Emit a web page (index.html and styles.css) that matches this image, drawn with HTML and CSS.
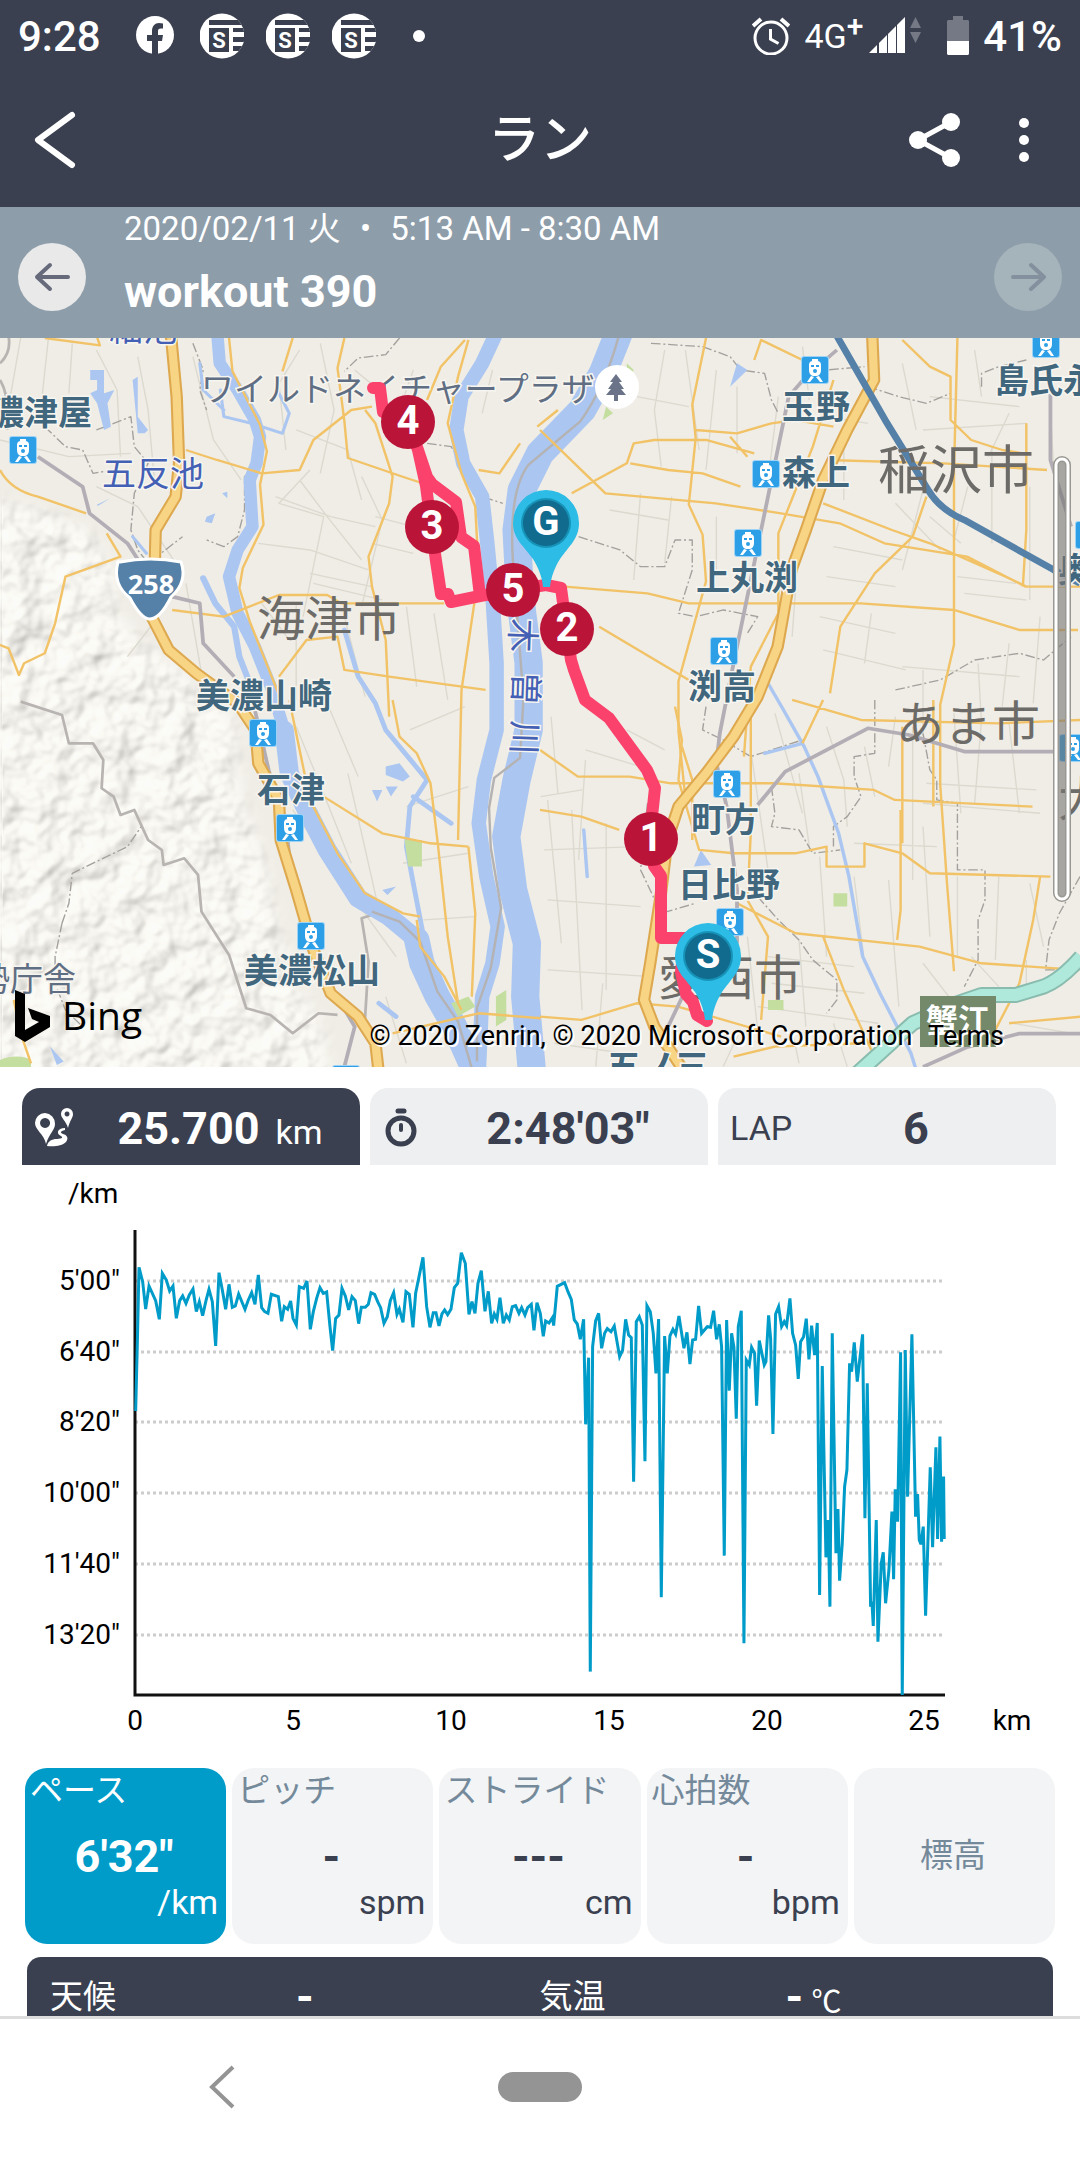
FILE: index.html
```html
<!DOCTYPE html>
<html lang="ja">
<head>
  <meta charset="utf-8">
  <meta name="viewport" content="width=device-width, initial-scale=1">
  <title>ラン - workout 390</title>
  <link rel="stylesheet" href="styles.css">
</head>
<body>
  <!-- shared icons -->
  <svg class="defs" width="0" height="0" aria-hidden="true">
    <symbol id="news" viewBox="0 0 44 46">
      <clipPath id="newsClip"><circle cx="22" cy="23" r="22.500"/></clipPath>
      <g clip-path="url(#newsClip)">
        <path fill="#fff" d="M0 0h44v46H0z"/>
        <path fill="#3a404f" d="M9 7h35v5H9zM9 15h20v24H9zM33 15h11v4H33zM33 24h11v5H33zM33 33h11v5H33z"/>
      </g>
      <text x="19" y="35" fill="#fff" font-size="22" font-weight="700" text-anchor="middle" font-family="Roboto, sans-serif">S</text>
    </symbol>
    <symbol id="train" viewBox="0 0 28 28">
      <rect width="28" height="28" rx="3" fill="#9fd3f5"/>
      <rect x="1" y="1" width="26" height="26" rx="2" fill="#2c9fe6"/>
      <path fill="#fff" d="M11 3h6v2h-6zM8 9q0-4 4-4h4q4 0 4 4v5q0 5-4 6h-4q-4-1-4-6zM10 20l3 1-4 5H6zM18 20l-3 1 4 5h3z"/>
      <path fill="#2c9fe6" d="M10 9h3v2h-3zM15 9h3v2h-3z"/>
      <circle cx="14" cy="15" r="2" fill="#2c9fe6"/>
    </symbol>
    <symbol id="pin" viewBox="0 0 68 98">
      <path fill="#2cbce6" d="M34 0a33 33 0 0 1 33 33c0 16-10 23-19 36-5 8-9 18-10 28h-7c-1-11-5-20-10-28C12 56 1 49 1 33A33 33 0 0 1 34 0z"/>
      <circle cx="34" cy="33" r="25" fill="#1793b8"/>
      <circle cx="34" cy="33" r="23" fill="#106b8f"/>
    </symbol>
  </svg>

  <div class="status-bar">
    <span class="clock">9:28</span>
    <svg class="fb" viewBox="0 0 38 40"><circle cx="19" cy="19" r="19" fill="#fff"/><path fill="#3a404f" d="M16 40V25h-5v-6h5v-4c0-5 3-8 7-8l4 .500v5h-2c-2.500 0-3 1-3 3V19h5l-1 6h-4v15z"/></svg>
    <svg class="news"><use href="#news"/></svg>
    <svg class="news"><use href="#news"/></svg>
    <svg class="news"><use href="#news"/></svg>
    <span class="dot"></span>
    <div class="status-right">
      <svg class="alarm" viewBox="0 0 38 38" fill="none" stroke="#fff"><circle cx="19" cy="21" r="16" stroke-width="3"/><path stroke-width="3" d="M18.500 12v10l8 4.500"/><path stroke-width="4" d="M1 9l8-7M29 2l8 7"/></svg>
      <span class="network">4G<sup>+</sup></span>
      <svg class="signal" viewBox="0 0 54 38">
        <path fill="#fff" d="M0 36l8-8v8zM10 26l8-8v18h-8zM19 17l8-8v27h-8zM28 8l8-8v36h-8z"/>
        <path fill="#747985" d="M41 11l5.500-11L52 11zM41 15h11l-5.500 11z"/>
      </svg>
      <svg class="battery" viewBox="0 0 22 40"><path fill="#747985" d="M6 0h10v4h5l1 1v20H0V5l1-1h5z"/><path fill="#fff" d="M0 25h22v13l-1 1H1l-1-1z"/></svg>
      <span class="clock">41%</span>
    </div>
  </div>

  <header class="app-header">
    <button class="icon-btn" aria-label="戻る">
      <svg width="44" height="60" viewBox="0 0 44 60" fill="none" stroke="#fff" stroke-width="6" stroke-linecap="round" stroke-linejoin="round"><path d="M40 5L6 30l34 25"/></svg>
    </button>
    <h1>ラン</h1>
    <div class="header-actions">
      <button class="icon-btn" aria-label="共有">
        <svg width="52" height="56" viewBox="0 0 52 56"><path d="M42 10L9 28l33 18" fill="none" stroke="#fff" stroke-width="5"/><g fill="#fff"><circle cx="9" cy="28" r="9"/><circle cx="42" cy="10" r="9"/><circle cx="42" cy="46" r="9"/></g></svg>
      </button>
      <button class="icon-btn" aria-label="メニュー">
        <svg width="12" height="48" viewBox="0 0 12 48" fill="#fff"><circle cx="6" cy="7" r="5"/><circle cx="6" cy="24" r="5"/><circle cx="6" cy="41" r="5"/></svg>
      </button>
    </div>
  </header>

  <section class="workout-bar">
    <button class="step" aria-label="前のワークアウト">
      <svg viewBox="0 0 68 68"><path d="M50 34H19M32 22L19 34l13 12"/></svg>
    </button>
    <div class="workout-info">
      <p>2020/02/11 火 <span class="sep">•</span> 5:13 AM - 8:30 AM</p>
      <h2>workout 390</h2>
    </div>
    <button class="step" aria-label="次のワークアウト" disabled>
      <svg viewBox="0 0 68 68"><path d="M19 34h31M37 22l13 12-13 12"/></svg>
    </button>
  </section>

  <main>
    <div class="map">
      <svg viewBox="0 8 1080 729" role="img" aria-label="コースマップ">
        <defs>
          <filter id="relief" x="0" y="0" width="100%" height="100%">
            <feTurbulence type="fractalNoise" baseFrequency=".011" numOctaves="3" seed="8"/>
            <feGaussianBlur stdDeviation="3"/>
            <feDiffuseLighting surfaceScale="20" diffuseConstant="1.130" lighting-color="#f8f6f1"><feDistantLight azimuth="225" elevation="64"/></feDiffuseLighting>
            <feComposite in2="SourceGraphic" operator="in"/>
          </filter>
          <filter id="soft"><feGaussianBlur stdDeviation="22"/></filter>
          <mask id="hillMask"><path filter="url(#soft)" fill="#fff" d="M-60 500L120 540 240 590 330 700 340 860 450 960 570 1070 680 1170 700 1400 760 1560 800 1760 860 1960 940 2100 960 2300H-60z"/></mask>
        </defs>
        <rect y="8" width="1080" height="729" fill="#efede6"/>

        <g transform="scale(.3444 .3333)" fill="none" stroke-linejoin="round">
          <g mask="url(#hillMask)" opacity=".8"><rect y="400" width="1000" height="1850" fill="#fff" filter="url(#relief)"/></g>

          <!-- small streets -->
          <g stroke="#dcd9cf" stroke-width="4">
            <path d="M60 24L30 200M140 30l-20 190M210 40l-10 150M280 60l60 120 10 200M400 80l30 160 20 230M0 330l200 50 180-10M280 470l120 60 130 200M560 80l60 250 80 120M870 60l-60 100 20 200M930 40l40 200-40 190M1030 120l70 60M860 300l150 60 40 150M900 420l-90 100 130 40-60 300M950 560l-80-110M950 560l100 130M800 500l160 60 130 30M750 640l150 20 170 60M900 730l180 40M910 760l200 50M1050 440l60 130-60 260M1090 560l110 30M1080 640l120 30M1200 120l-60 180M1400 250l30-130"/>
            <path d="M760 820l80 110M860 820v290M1000 860l60 240M1180 830l30 240M1260 850l40 260M860 1190l60 150 100 260M950 1120l90 220M1010 1330l40 180 50 230M850 1440l230 340 70 100M1190 1200l160-70M1180 1430l180-60M1170 1600l190-30M1230 1770l150-10M1120 2000l60 200M540 760l50 300M370 980l90-120M1570 1400l120-20M1600 1160l20 230M1700 1290l-20 300"/>
            <path d="M1930 60l-30 180 20 170M1990 60l40 300M2080 120l-30 300M1850 200l150 30M2140 170v200M2260 200l-30 250M2330 50l20 160M2400 260l120 20M2450 330v180M1860 490l-20 260M1950 500l-20 200M2080 560v180M1770 540l170 30M2320 640l-20 280M2420 650l200 40M2400 740l200 30M2530 850l-20 150M2380 860l220 50M2390 960l240 60M2600 520l130 140M2680 480l-60 240M2700 560l90 80M2810 470l-40 160M2880 350v290M2930 250l-60 130M2990 470v340M3050 240l20 380M2680 300l300-20M2700 200l260 30M2620 100l40 200M2830 60l20 140M2780 740l170 20M2800 790l180 20M2620 1010l340 30M2680 1020v200M2840 1000l10 180M2930 940l-20 190M3020 860l-20 260"/>
            <path d="M1590 1410l40 430M1660 1440l30 600M1760 1480v500M1580 1560l270-10M1590 1710l270 20M1590 1920l300 20M1820 1200l110 60M1700 1260l160 50M2180 1260l50 360M2250 1150l80 300M2320 1330l30 220M2400 1190l50 160 10 140M2510 1250l30 150M2600 1160l-20 150M2650 1190v460M2770 1150l20 300M2850 1170l-20 250M2930 1180l30 270M2680 1490l20 330M2780 1640v240M2900 1640l-10 250M2990 1660l40 190M2690 1360l320 20M2680 1420l340 30M2480 1540l240 10M2380 1580l20 300M2480 1640l30 260M2580 1650l30 380M2230 1880l250 30M2240 1960l270 30M2200 2030l350 50M2170 1820l30 280M2320 1830l20 260M2680 1900l90 120M2820 1880l80 90M2980 1890v110M2150 2100l-50 110M2300 2100l20 100M2420 2080l40 130M1750 1960l-20 250M1610 2140l200 30M2940 2080l170 30"/>
          </g>

          <!-- municipal borders -->
          <g stroke="#a3a09d" stroke-width="4" stroke-dasharray="28 8 6 8">
            <path d="M130 290l60 60 50 10 30 70 60-10M280 300l100-40 10 90 40 50-40 90-10 110 20 60 30 40 100-80M560 40l30 80-10 60 20 60M1160 24l-40 50-80 10-40 40M760 390l-50 50v100l-20 80-40 30-50-20M1240 340l70 10 90 150 60 20M1890 40l150 10 80 30 30 40 70 10 20 80 20 40M2340 150l50 10 10-40 110-10M2520 170l90 30 80 20 70-30M2850 170v-40l50-20 80-20M1680 620l120 40 60 50h70l30-80h50v90l-40 130 50 10 80-20 100 20-30 50"/>
            <path d="M180 1780l20-60 10-90 160-80 40-60M180 1780l-20 100v80l30 80 50 50M2050 1130l-10 70 60 30 80 50 150-50M2540 1110v160l-60 10v60l20 60-40 60-40 30v60M2240 1370l10 80-10 40 80 10 40 70 80-10M2680 1210l20 110 20 30v60l60 10v200h80v90l-20 60v120l-40 80M1880 1420l-20 200 60 130 100-30M2200 1700l60 70 60 60 40 60 70 60v60l-30 40M3136 1640l-60 110-30 80-10 90h100M2600 1080l130-30 100-60 130-20 70 20 80-70"/>
          </g>
          <path d="M20 0q20 60-20 100M0 150q30 50 20 150M60 1115l120 40 20 85h70l30 50-5 85 35 25 20 55 40-15 40 90 40 30 5 45 60-20 40 50 10 110 80 130 50 160 70 20 65 55 75-60 55 5M1110 1745l-60 20 20 130-10 170" stroke="#b7b4b2" stroke-width="8"/>

          <!-- rivers and ponds -->
          <g stroke="#abc6f1" stroke-linecap="round">
            <path stroke-width="36" d="M630 0L638 100 690 180 740 270 755 320 745 400 725 450 733 590 690 660 665 740 690 850 740 950 790 1080 825 1200"/>
            <path stroke-width="56" d="M825 1200L840 1330 885 1430 950 1560 1040 1705 1130 1760 1200 1820"/>
            <path stroke-width="74" d="M1210 1830L1225 1900 1270 2000 1320 2090 1380 2230"/>
            <path stroke-width="18" d="M590 745L625 820 680 890 695 980 725 1060"/>
            <path stroke-width="9" d="M580 100l10 80 60 60M385 620l40 50M640 180l10 80 80 20 90 30 20-60-30-60"/>
            <path stroke-width="42" d="M1445 0L1400 100 1340 200 1325 300 1345 400 1400 500 1415 640 1430 800 1442 1000V1200L1405 1350 1390 1480 1412 1640 1445 1790 1430 1900 1400 2000 1390 2230"/>
            <path stroke-width="82" d="M1800 0L1750 130 1690 240 1568 370 1515 480 1500 600 1510 800 1535 1000V1200L1500 1350 1470 1520 1490 1680 1530 1840 1525 2000 1545 2230"/>
            <path stroke-width="14" d="M1000 900L1040 1040 1090 1120 1120 1200 1200 1300 1240 1350 1190 1430 1180 1550 1200 1660 1230 1820 1270 1960M1200 1400l110 80M1100 2020l50 40"/>
            <path stroke-width="10" d="M2230 1060l45 80 60 110 40 90 60 170 30 130 40 240 50 110 90 180 30 100M2220 1270l110-30M1695 1500l10 140"/>
          </g>
          <path fill="#abc6f1" d="M262 120h40v70l30-10-20 40 10 70-20 10-20-80-20-30 20-10v-30h-20zM385 150l15-10v120l30 40-10 10h-20zM600 560l25-10-10 30-20-5zM645 490l15-5v20zM280 525l40-20-35 22zM1120 1310l40-10 30 40-20 15-50-20zM1080 1380h30l-15 35zM1120 1370h35l-20 30zM1110 1680l40-10-25 25zM2120 170l20-70 30 20zM2015 1610l20-50 30 45zM145 2150l40 45-20 10z"/>
          <path fill="#c4dea0" stroke="none" d="M1175 1530h50v80h-40zM1310 2020l50-20 20 30-50 30zM1440 2000l30-20v90l-30 20zM2420 1690h40v40h-40zM2230 2010h45v30h-45zM1760 230l20 20-30 20zM1820 100l20 20-20 30zM0 2190q50-20 90 0v30H0z"/>
          <path stroke="#b4b2b2" stroke-width="7" d="M1795 24q-40 150-110 250l-150 130q-60 80-45 300l30 400-10 180-75 60-15 90 5 120 30 180-30 180-40 120v160M1080 1745l80 30 60 60 50 150 60 90 40 140"/>

          <!-- prefectural roads -->
          <g stroke="#f2c266" stroke-width="7">
            <path d="M130 24l160 22-10-30M665 24l10 100 80 160 20 80-20 100 10 120-60 130-10 60 30 100 50 130 50 130M850 24l-30 100M1000 24l-20 90 20 160 10 110 170 60 90 30M540 360l90 30 130 40 110-10 40-90 110-90 60-10M1060 240l30 40 50 160-10 80-60 160 10 90 40 160 10 230M1350 30l-70 80-40 100M1360 30l-30 110-30 140 40 150 40 100 10 200-50 350-10 450M0 420q30 60 110 80l140 50M310 610l40 70-160 60-30 140-30 90-60 30-15 35-30-80-50-20M500 840l150 20 160-65h140l40 25h300M810 1040l80-110 90-10 20 100 130 20 280 40M1140 1110l20 110 50 50 40 90 20 170 30 290 30 200M840 1110l60 300 80 160 80 120 110 60 50 10M940 1400l170 110 140 30 110 10M1360 1550l20 200-10 250M1210 1770l10 80 70 90 50 100M1140 2110l250-60 180 15M1390 420l60 10 60-90M1560 290l60-50"/>
            <path d="M1568 300l130 130 60 60 320 30 190 30 170 30 130 60 240 40 170 90h160M1660 490l160-90 20-60 60-10h150l140 40M1830 400l110 20 100 10 110 40M2050 24l-40 200 10 100-20 200 40 90 10 140-80 300v150l20 200M2020 300l120 10 100-30 70-10 110 20M2120 320l50 60M2190 90l20-60 120 60M2420 150l-60 200-50 130-50 130v240l-80 160-20 270M2780 24l-10 400v520l-40 180v240l20 300 20 260M2400 390l340 10 300 20M2620 30l80 80 60 30v130l60 60 90 30 60 10M2390 520l200 80 110 40 220 100 60 30h150M2690 500l-40 120-110 110-100 160-30 200M1640 770l240 20 120 30h500l270 20 190 60h170M1740 890l260 160M2980 280v320l-10 170"/>
            <path d="M1568 1260l110 80h150l120 20h300l290 20 60 30 400 20M1568 1440l120 20 110 40M1960 1130l20 100-10 120 60 210 100 10h180l90-20v60h110v-70l110 30 80 60 350 10M2180 1130v380l-10 200 60 110-20 250M2620 1190v350M2615 1440v300l-10 90M2710 1110v320M2140 1720l170 90 360 40 180 50 280 20M1568 2060l120 10 160-50 120 10 300 90M3020 1640l-20 130-40 190-80 160M2390 1820l60 160 80 180M2300 1110l200 60 400 10 240-10M2930 2080l210-20M2390 1110l-60 130M2130 2180l120-30 250-10M2010 1530v-180l-30-100M40 2010l20 100 30 90"/>
          </g>

          <!-- railways -->
          <path stroke="#b3adb5" stroke-width="11" d="M110 380l130 90 20 80 110 90 50 80M500 800l80 20 10 120 90 100M740 1140l40 180 50 160 20 200 60 200 80 140 40 70-30 120M2430 60l-90 80-50 60-80 400-80 400-40 210-10 90 30 130 30 250v160M2200 1425l80-100 240-130 120 20 160 50h340M1940 2090l60-130M3050 140v250l60 200M2680 2211l130-60 150-40h180"/>

          <!-- national roads -->
          <path stroke="#dda84e" stroke-width="36" d="M495 0L513 200 520 400 510 500 452 600 448 760 440 860 490 960 570 1030 690 1120 742 1200 750 1300 810 1410 815 1530 860 1680 910 1860 960 1990 1040 2060 1090 2140 1100 2230M2532 0L2538 150 2460 300 2390 450 2340 600 2298 720 2258 950 2200 1100 2130 1220 2050 1330 1970 1430 1938 1530 1918 1700 1888 1900 1870 2010 1900 2090 1990 2230"/>
          <path stroke="#f8d485" stroke-width="24" d="M495 0L513 200 520 400 510 500 452 600 448 760 440 860 490 960 570 1030 690 1120 742 1200 750 1300 810 1410 815 1530 860 1680 910 1860 960 1990 1040 2060 1090 2140 1100 2230M2532 0L2538 150 2460 300 2390 450 2340 600 2298 720 2258 950 2200 1100 2130 1220 2050 1330 1970 1430 1938 1530 1918 1700 1888 1900 1870 2010 1900 2090 1990 2230"/>
          <path stroke="#5580a8" stroke-width="20" d="M2420 0L2570 270 2695 480Q2730 540 2800 570L3060 720 3136 760"/>
          <path stroke="#89bcae" stroke-width="48" d="M2490 2230L2650 2080 2780 2020 2850 1995H2950L3030 1970Q3080 1950 3140 1880"/>
          <path stroke="#afe9db" stroke-width="36" d="M2490 2230L2650 2080 2780 2020 2850 1995H2950L3030 1970Q3080 1950 3140 1880"/>
        </g>

        <!-- place names -->
        <g class="station-name">
          <text x="92" y="95" text-anchor="end">美濃津屋</text>
          <text x="196" y="378">美濃山崎</text>
          <text x="257" y="472">石津</text>
          <text x="244" y="653">美濃松山</text>
          <text x="782" y="89">玉野</text>
          <text x="782" y="155">森上</text>
          <text x="696" y="260">上丸渕</text>
          <text x="688" y="369">渕高</text>
          <text x="691" y="502">町方</text>
          <text x="678" y="567">日比野</text>
          <text x="995" y="63">島氏永</text>
          <text x="1058" y="252">奥田</text>
          <text x="607" y="749">五ノ三</text>
        </g>
        <g class="water-name">
          <text x="109" y="11">細池</text>
          <text x="102" y="156">五反池</text>
          <text transform="translate(511 288) rotate(92)">木</text>
          <text transform="translate(514 341) rotate(92)">曽</text>
          <text transform="translate(513 390) rotate(92)">川</text>
        </g>
        <g class="spot-name">
          <text x="201" y="71">ワイルドネイチャープラザ</text>
          <text x="76" y="661" text-anchor="end">伊勢庁舎</text>
        </g>
        <g class="city-name">
          <text x="257" y="306">海津市</text>
          <text x="878" y="159" class="large">稲沢市</text>
          <text x="896" y="411">あま市</text>
          <text x="658" y="665">愛西市</text>
          <text x="1058" y="486">大治町</text>
        </g>

        <path d="M120 232Q150 226 181 232 188 252 171 267 160 289 150 289 141 289 130 268 112 254 118 232z" fill="#5580a8" stroke="#fff" stroke-width="3"/>
        <text x="151" y="264" class="route-no">258</text>
        <rect x="920" y="666" width="76" height="51" fill="#74896a"/>
        <text x="958" y="702" class="ic-name">蟹江</text>
        <circle cx="617" cy="57" r="22" fill="#fff"/>
        <path fill="#6a7388" d="M616 44l6 8h-3l5 7h-3l5 6h-8v6h-4v-6h-8l5-6h-3l5-7h-3z"/>

        <g>
          <use href="#train" x="9" y="106" width="28" height="28"/>
          <use href="#train" x="249" y="389" width="28" height="28"/>
          <use href="#train" x="276" y="484" width="28" height="28"/>
          <use href="#train" x="297" y="592" width="28" height="28"/>
          <use href="#train" x="332" y="735" width="28" height="28"/>
          <use href="#train" x="801" y="26" width="28" height="28"/>
          <use href="#train" x="752" y="130" width="28" height="28"/>
          <use href="#train" x="734" y="199" width="28" height="28"/>
          <use href="#train" x="710" y="307" width="28" height="28"/>
          <use href="#train" x="713" y="440" width="28" height="28"/>
          <use href="#train" x="716" y="578" width="28" height="28"/>
          <use href="#train" x="1032" y="0" width="28" height="28"/>
          <use href="#train" x="1075" y="191" width="28" height="28"/>
          <use href="#train" x="1059" y="404" width="28" height="28"/>
        </g>

        <!-- course -->
        <path class="course" d="M373 58h7l3 24 25 10 10 28 9 27 5 7 24 18 5 35 13 9 6 50-29 6-3-8h-7l-5-33-5-37-5-38-8-36M480 266l33-6 33-5 15 3 4 29 6 43 3 10 11 30 24 18 38 52 8 18-3 28-2 23 4 27 7 10v62h24l-4 34 5 22 7 8 4 13 10 6"/>

        <use href="#pin" x="512" y="160" width="68" height="98"/>
        <use href="#pin" x="674" y="593" width="68" height="98"/>
        <g fill="#bb1439">
          <circle cx="651" cy="509" r="27"/>
          <circle cx="567" cy="299" r="27"/>
          <circle cx="432" cy="197" r="27"/>
          <circle cx="408" cy="92" r="27"/>
          <circle cx="513" cy="260" r="27"/>
        </g>
        <g class="marker-label">
          <text x="546" y="205">G</text>
          <text x="708" y="638">S</text>
          <text x="651" y="521">1</text>
          <text x="567" y="311">2</text>
          <text x="432" y="209">3</text>
          <text x="408" y="104">4</text>
          <text x="513" y="272">5</text>
        </g>

        <rect x="1056" y="129" width="12" height="440" rx="6" fill="#777" fill-opacity=".6" stroke="#9a9892" stroke-width="6"/>
        <rect x="1056" y="129" width="12" height="440" rx="6" fill="none" stroke="#fff" stroke-width="3"/>

        <path d="M15 660l10 4v36l14-8-7-3-4-11 22 8v11l-25 15-10-6z"/>
        <text x="62" y="700" class="bing">Bing</text>
      </svg>
      <p class="copyright">© 2020 Zenrin, © 2020 Microsoft Corporation <a href="#terms">Terms</a></p>
    </div>

    <div class="tabs">
      <button class="tab active">
        <span class="tab-label">
          <svg width="40" height="40" viewBox="0 0 40 40">
            <path fill="#fff" fill-rule="evenodd" d="M11 5a10.500 10.500 0 0 1 10 11c0 6-6 10-9 20C10 26 1 22 1 15A10 10 0 0 1 11 5zm0 5a5 5 0 1 0 .100 0zM33 0a6 6 0 0 1 6 6c0 4-3 6-5 14-2-7-7-10-7-14a6 6 0 0 1 6-6zm0 3.500a2.500 2.500 0 1 0 .100 0z"/>
            <path fill="#fff" d="M31 20c-8 0-9 6-4 8 3 2 0 3-6 3-5 1-7 3-8 7 7 1 15 0 19-4 3-4 1-7-3-8-3-1-3-3 2-4z"/>
          </svg>
        </span>
        <span class="tab-value"><b>25.700</b> <small>km</small></span>
      </button>
      <button class="tab">
        <span class="tab-label">
          <svg width="38" height="40" viewBox="-2 0 38 40" fill="none" stroke="#3a404f" stroke-linecap="round"><circle cx="17" cy="23" r="13" stroke-width="5"/><path stroke-width="5" d="M14 3h6"/><path stroke-width="4" d="M17 17v5"/></svg>
        </span>
        <span class="tab-value"><b>2:48'03"</b></span>
      </button>
      <button class="tab">
        <span class="tab-label">LAP</span>
        <span class="tab-value"><b>6</b></span>
      </button>
    </div>

    <svg class="chart" viewBox="0 0 1080 603" role="img" aria-label="ペースのグラフ">
      <g class="grid-line">
        <path d="M135 116h810M135 187h810M135 257h810M135 328h810M135 399h810M135 470h810"/>
      </g>
      <path d="M135 65v465h810" fill="none" stroke="#111" stroke-width="3"/>
      <!-- pace samples, three units per pixel -->
      <g transform="translate(120 45) scale(.3333)">
        <polyline class="pace" points="47,603 52,400 57,172 68,215 77,297 87,228 107,272 118,328 127,190 139,210 149,243 159,228 169,325 179,272 188,258 198,280 208,255 219,237 229,305 238,275 248,317 258,272 267,238 277,275 287,408 297,188 307,240 317,298 327,223 337,292 346,288 356,252 375,298 385,270 395,248 405,283 415,195 425,293 434,305 444,310 454,253 475,260 485,334 493,290 503,298 512,273 519,325 529,345 538,230 551,235 561,213 571,358 580,305 590,265 600,233 610,250 620,246 630,350 638,422 647,325 657,315 666,235 676,258 686,300 696,260 706,272 716,341 724,292 736,292 745,283 753,248 764,253 773,275 782,293 792,340 802,320 811,272 821,248 831,313 838,297 849,337 858,245 868,253 879,352 887,250 909,142 920,290 930,352 940,308 948,308 957,348 966,312 974,300 983,314 993,298 1003,233 1013,220 1024,128 1036,160 1047,313 1056,275 1065,310 1074,220 1084,182 1095,304 1105,244 1115,340 1123,312 1131,328 1140,263 1150,340 1159,315 1168,330 1177,290 1187,287 1197,310 1205,293 1215,315 1223,293 1234,283 1242,361 1251,278 1261,310 1270,379 1277,333 1287,339 1298,322 1301,347 1312,229 1334,218 1344,245 1354,268 1363,330 1372,342 1381,388 1391,328 1397,643 1406,443 1411,1385 1418,410 1427,333 1436,310 1445,415 1454,370 1462,356 1473,365 1483,348 1499,440 1508,420 1517,328 1526,375 1534,383 1541,815 1549,335 1558,320 1567,345 1575,754 1581,287 1591,305 1600,370 1608,490 1616,327 1624,1162 1634,378 1642,490 1650,378 1659,358 1667,373 1677,318 1692,415 1701,367 1710,462 1718,390 1727,388 1736,288 1745,370 1762,350 1772,352 1781,302 1790,388 1798,343 1805,410 1813,1037 1820,330 1828,542 1835,370 1842,412 1849,626 1855,350 1864,302 1872,1300 1879,450 1888,465 1895,412 1904,430 1910,587 1918,392 1933,465 1938,455 1946,316 1952,385 1959,672 1967,312 1976,290 1985,350 1993,335 2000,347 2010,265 2018,370 2027,405 2035,507 2042,395 2051,380 2059,326 2067,448 2075,347 2084,435 2092,339 2099,1155 2107,468 2118,1042 2125,930 2130,1190 2137,370 2148,1030 2154,897 2159,1112 2167,1000 2174,830 2181,780 2189,460 2195,485 2203,397 2212,515 2228,373 2235,925 2242,520 2252,1190 2256,1175 2260,1248 2269,930 2274,1295 2284,1060 2290,1027 2297,1180 2307,1080 2316,905 2321,1108 2326,838 2333,935 2342,427 2347,1455 2356,420 2363,860 2376,373 2387,920 2393,852 2398,990 2403,1003 2410,950 2417,1217 2431,772 2438,1012 2448,712 2453,987 2460,680 2465,995 2471,800 2473,987"/>
      </g>
      <g class="axis-text">
        <text x="68" y="38">/km</text>
        <g text-anchor="end">
          <text x="120" y="125">5'00"</text>
          <text x="120" y="196">6'40"</text>
          <text x="120" y="266">8'20"</text>
          <text x="120" y="337">10'00"</text>
          <text x="120" y="408">11'40"</text>
          <text x="120" y="479">13'20"</text>
        </g>
        <g text-anchor="middle">
          <text x="135" y="565">0</text>
          <text x="293" y="565">5</text>
          <text x="451" y="565">10</text>
          <text x="609" y="565">15</text>
          <text x="767" y="565">20</text>
          <text x="924" y="565">25</text>
          <text x="1012" y="565">km</text>
        </g>
      </g>
    </svg>

    <div class="metrics">
      <button class="metric active"><span class="name">ペース</span><b>6'32"</b><span class="unit">/km</span></button>
      <button class="metric"><span class="name">ピッチ</span><b>-</b><span class="unit">spm</span></button>
      <button class="metric"><span class="name">ストライド</span><b>---</b><span class="unit">cm</span></button>
      <button class="metric"><span class="name">心拍数</span><b>-</b><span class="unit">bpm</span></button>
      <button class="metric single"><span class="name">標高</span></button>
    </div>

    <dl class="weather">
      <dt>天候</dt><dd><b>-</b></dd>
      <dt>気温</dt><dd><b>-</b> <span class="degree">℃</span></dd>
    </dl>
  </main>

  <nav class="system-nav">
    <button class="back" aria-label="戻る"><svg width="26" height="44" viewBox="0 0 26 44" fill="none" stroke="#949494" stroke-width="4"><path d="M24 2L3 22l21 20"/></svg></button>
    <button class="home" aria-label="ホーム"></button>
    <span></span>
  </nav>
</body>
</html>
```
FILE: styles.css
```css
* {
  box-sizing: border-box;
}

body {
  margin: 0;
  height: 100vh;
  display: flex;
  flex-direction: column;
  background: #fff;
  color: #3a404f;
  font-family: Roboto, "Noto Sans CJK JP", sans-serif;
}

button {
  padding: 0;
  border: 0;
  background: none;
  color: inherit;
  font: inherit;
  cursor: pointer;
}

h1, h2, p, dl, dd {
  margin: 0;
}

svg {
  display: block;
}

.defs {
  position: absolute;
}

/* STATUS BAR */
.status-bar {
  flex: none;
  display: flex;
  align-items: center;
  height: 72px;
  padding: 0 18px;
  background: #3a404f;
  color: #fff;
}

.clock {
  font-size: 42px;
  font-weight: 500;
}

.fb {
  width: 38px;
  height: 40px;
  margin: 0 26px 0 35px;
}

.news {
  width: 44px;
  height: 46px;
  margin-right: 22px;
}

.dot {
  width: 12px;
  height: 12px;
  margin-left: 15px;
  border-radius: 50%;
  background: #fff;
}

.status-right {
  display: flex;
  align-items: center;
  margin-left: auto;
}

.alarm {
  width: 38px;
  height: 38px;
}

.network {
  margin: 0 6px 0 14px;
  font-size: 34px;
}

.network sup {
  font-size: 30px;
  font-weight: 500;
  line-height: 0;
}

.signal {
  width: 54px;
  height: 38px;
}

.battery {
  width: 22px;
  height: 40px;
  margin: 0 14px 0 24px;
}

/* HEADER */
.app-header {
  flex: none;
  display: grid;
  grid-template-columns: 1fr auto 1fr;
  align-items: center;
  height: 135px;
  padding: 0 50px 0 32px;
  background: #3a404f;
  color: #fff;
}

.app-header h1 {
  padding: 0 0 8px 18px;
  font-size: 52px;
  font-weight: 500;
}

.icon-btn {
  justify-self: start;
}

.header-actions {
  display: flex;
  justify-content: flex-end;
  align-items: center;
  gap: 57px;
}

/* WORKOUT BAR */
.workout-bar {
  flex: none;
  display: flex;
  align-items: center;
  gap: 38px;
  padding: 0 18px;
  background: #8e9daa;
  color: #fff;
}

.workout-info {
  flex: 1;
  padding-bottom: 19px;
}

.workout-info p {
  font-size: 33px;
  line-height: 43px;
}

.workout-info .sep {
  margin: 0 11px;
}

.workout-info h2 {
  margin-top: 14px;
  font-size: 45px;
  line-height: 55px;
}

.step {
  width: 68px;
  height: 68px;
  margin-top: 9px;
  border-radius: 50%;
  background: #e9e9e9;
}

.step svg {
  fill: none;
  stroke: #666a7a;
  stroke-width: 4;
  stroke-linecap: round;
  stroke-linejoin: round;
}

.step:disabled {
  background: #a5b3bb;
}

.step:disabled svg {
  stroke: #84909d;
}

/* MAP */
main {
  flex: 1;
  min-height: 0;
  overflow: hidden;
}

.map {
  position: relative;
}

.map svg {
  width: 100%;
  height: auto;
}

.station-name,
.water-name,
.spot-name,
.city-name {
  font-size: 34px;
  font-family: "Noto Sans CJK JP", sans-serif;
  paint-order: stroke;
  stroke: #f7f5ef;
  stroke-width: 3px;
}

.station-name {
  fill: #41677e;
  font-weight: 700;
}

.water-name {
  fill: #4460b5;
}

.spot-name {
  fill: #5f6e83;
  font-size: 33px;
}

.city-name {
  fill: #6d6b68;
  font-size: 48px;
  stroke-width: 0;
}

.city-name .large {
  font-size: 52px;
}

.route-no {
  fill: #fff;
  font: 700 27px "Noto Sans", sans-serif;
  text-anchor: middle;
}

.ic-name {
  fill: #fff;
  font: 700 32px "Noto Sans CJK JP", sans-serif;
  text-anchor: middle;
}

.course {
  fill: none;
  stroke: #fb426c;
  stroke-width: 12;
  stroke-linecap: round;
  stroke-linejoin: round;
}

.marker-label {
  fill: #fff;
  font-size: 40px;
  font-weight: 700;
  text-anchor: middle;
}

.bing {
  font: 39px "Open Sans", sans-serif;
}

.copyright {
  position: absolute;
  right: 76px;
  bottom: 15px;
  color: #000;
  font-size: 27px;
  line-height: 32px;
  text-shadow: 2px 2px #fff;
}

.copyright a {
  margin-left: 9px;
  color: inherit;
  text-decoration: none;
}

/* SUMMARY TABS */
.tabs {
  display: grid;
  grid-template-columns: repeat(3, 1fr);
  gap: 10px;
  padding: 21px 24px 0 22px;
}

.tab {
  display: grid;
  grid-template-columns: 58px 1fr;
  align-items: center;
  height: 77px;
  padding-top: 3px;
  border-radius: 18px 18px 0 0;
  background: #eeeff1;
}

.tab.active {
  background: #3a404f;
  color: #fff;
}

.tab-label {
  padding-left: 12px;
  font-size: 34px;
  text-align: left;
}

.tab-value b {
  font-size: 45px;
}

.tab-value small {
  margin-left: 12px;
  font-size: 34px;
}

/* CHART */
.chart {
  width: 100%;
  height: auto;
}

.grid-line {
  stroke: #ccc;
  stroke-width: 3;
  stroke-dasharray: 3 3;
}

.pace {
  fill: none;
  stroke: #009cc9;
  stroke-width: 9;
}

.axis-text {
  fill: #000;
  font-size: 28px;
}

/* METRICS */
.metrics {
  display: grid;
  grid-template-columns: repeat(5, 1fr);
  gap: 6px;
  padding: 0 25px;
}

.metric {
  display: flex;
  flex-direction: column;
  align-items: stretch;
  height: 176px;
  padding: 0 8px 0 5px;
  border-radius: 22px;
  background: #f2f4f6;
  font-size: 34px;
  line-height: 46px;
}

.metric.active {
  background: #009cc9;
  color: #fff;
}

.metric .name {
  color: #74899a;
  font-size: 33px;
  text-align: left;
}

.metric.active .name {
  color: #fff;
}

.metric b {
  font-size: 45px;
  line-height: 86px;
}

.metric .unit {
  line-height: 4px;
  text-align: right;
}

.metric.single {
  align-items: center;
  justify-content: center;
}

/* WEATHER */
.weather {
  display: grid;
  grid-template-columns: 220px 1fr 220px 1fr;
  margin: 13px 27px 0;
  padding: 10px 24px 0 23px;
  border-radius: 14px 14px 0 0;
  background: #3a404f;
  color: #fff;
  font-size: 33px;
  line-height: 60px;
}

.weather dd {
  padding-left: 26px;
}

.weather b {
  font-size: 45px;
}

.degree {
  font-family: "Noto Sans CJK JP", sans-serif;
  font-size: 30px;
}

/* SYSTEM NAV */
.system-nav {
  flex: none;
  display: grid;
  grid-template-columns: 1fr auto 1fr;
  align-items: center;
  justify-items: center;
  height: 144px;
  padding-bottom: 5px;
  border-top: 3px solid #ddd;
  background: #fff;
}

.system-nav .back {
  margin-right: 54px;
}

.system-nav .home {
  width: 84px;
  height: 30px;
  border-radius: 15px;
  background: #949494;
}
```
